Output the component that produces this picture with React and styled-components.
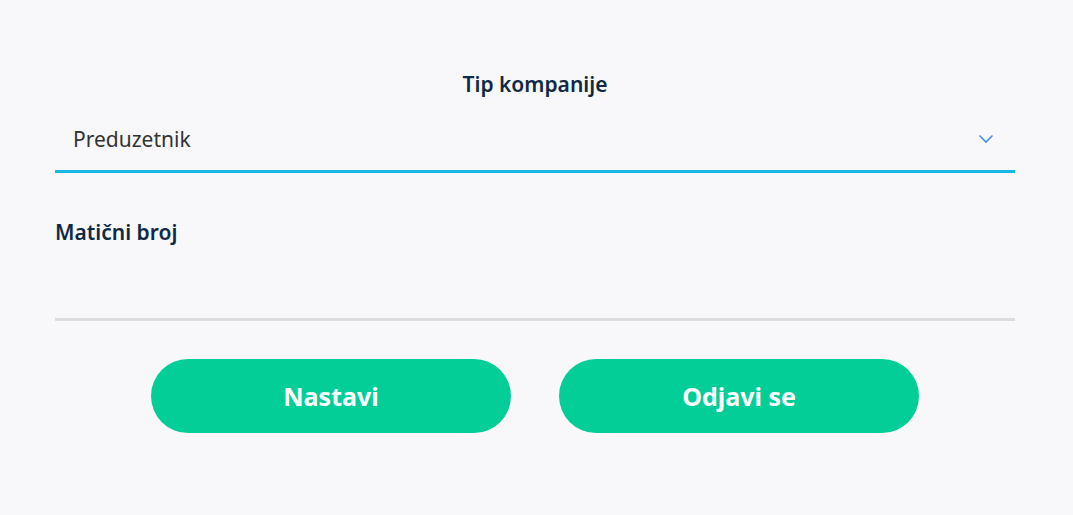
import React from "react";
import styled, { createGlobalStyle } from "styled-components";

const Global = createGlobalStyle`
  html, body { margin: 0; padding: 0; background: #f8f8fa; }
  body { font-family: "Noto Sans", "Open Sans", sans-serif; }
  * { box-sizing: border-box; }
`;

const Page = styled.div`
  width: 1073px;
  height: 515px;
  padding: 70px 58px 0 55px;
  background: #f8f8fa;
`;

const Form = styled.div`
  width: 960px;
  display: flex;
  flex-direction: column;
`;

const Title = styled.div`
  text-align: center;
  font-size: 21px;
  font-weight: 600;
  color: #0f2a44;
  line-height: 28px;
`;

const SelectRow = styled.div`
  display: flex;
  align-items: center;
  justify-content: space-between;
  height: 75px;
  padding: 10px 21px 0 18px;
  border-bottom: 3px solid ${(p) => p.$color};
`;

const SelectText = styled.span`
  font-size: 21px;
  color: #333;
  line-height: 28px;
`;

const Label = styled.div`
  margin-top: 45px;
  font-size: 21px;
  font-weight: 600;
  color: #0f2a44;
  line-height: 28px;
`;

const InputLine = styled.div`
  height: 75px;
  border-bottom: 3px solid #dcdce0;
`;

const Buttons = styled.div`
  display: flex;
  justify-content: center;
  gap: 48px;
  margin-top: 38px;
`;

const Button = styled.button`
  width: 360px;
  height: 74px;
  border: none;
  border-radius: 37px;
  background: #03ce98;
  color: #fff;
  font-family: "Noto Sans", "Open Sans", sans-serif;
  font-size: 25px;
  font-weight: 700;
  cursor: pointer;
`;

const Chevron = () => (
  <svg width="16" height="10" viewBox="0 0 16 10">
    <path d="M1.5 1.5 L8 8 L14.5 1.5" fill="none" stroke="#4a90d9" strokeWidth="1.6" />
  </svg>
);

export default function App() {
  return (
    <>
      <Global />
      <Page>
        <Form>
          <Title>Tip kompanije</Title>
          <SelectRow $color="#16b9e6">
            <SelectText>Preduzetnik</SelectText>
            <Chevron />
          </SelectRow>
          <Label>Matični broj</Label>
          <InputLine />
          <Buttons>
            <Button>Nastavi</Button>
            <Button>Odjavi se</Button>
          </Buttons>
        </Form>
      </Page>
    </>
  );
}
